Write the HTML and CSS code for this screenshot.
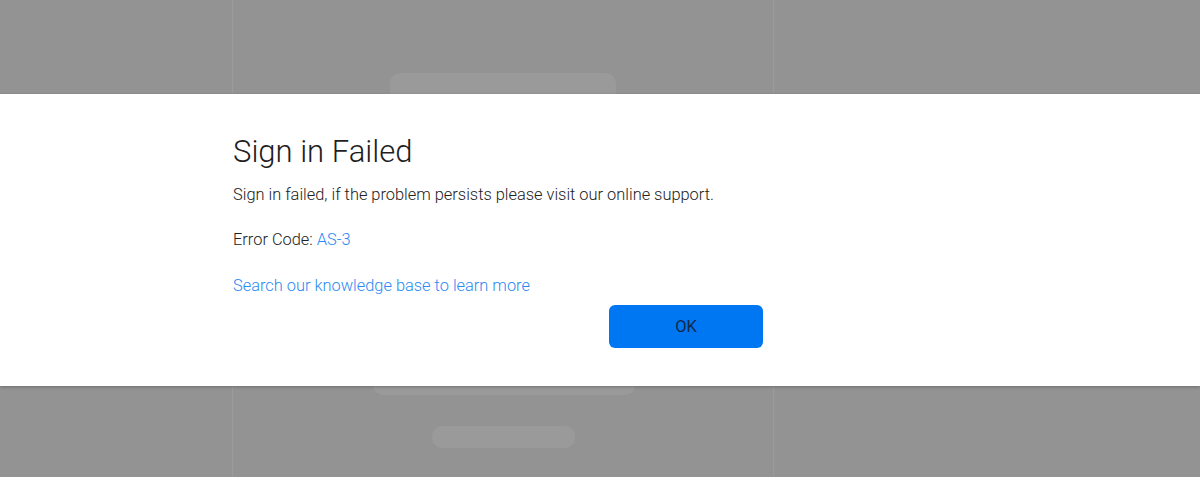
FILE: index.html
```html
<!DOCTYPE html>
<html lang="en">
<head>
<meta charset="utf-8">
<title>Sign in Failed</title>
<link rel="stylesheet" href="styles.css">
</head>
<body>
<div class="page">
  <div class="card">
    <div class="pill pill-top"></div>
    <div class="pill pill-mid"></div>
    <div class="pill pill-bottom"></div>
  </div>
</div>
<div class="modal">
  <div class="modal-body">
    <h1 class="title">Sign in Failed</h1>
    <p class="text">Sign in failed, if the problem persists please visit our online support.</p>
    <p class="text code">Error Code: <a class="link" href="#">AS-3</a></p>
    <p class="text kb"><a class="link" href="#">Search our knowledge base to learn more</a></p>
    <div class="actions">
      <button class="btn" type="button">OK</button>
    </div>
  </div>
</div>
</body>
</html>
```
FILE: styles.css
```css
* { box-sizing: border-box; }
html, body {
  margin: 0;
  padding: 0;
  width: 1200px;
  height: 477px;
  overflow: hidden;
  background: #939393;
  font-family: Roboto, "Liberation Sans", sans-serif;
}
.page {
  padding-left: 232px;
}
.card {
  width: 542px;
  height: 509px;
  margin-top: -32px;
  border: 1px solid #9b9b9b;
  border-bottom: none;
  border-radius: 18px 18px 0 0;
  display: flex;
  flex-direction: column;
  padding-top: 104px;
}
.pill {
  background: #9a9a9a;
  border-radius: 10px;
}
.pill-top {
  margin-left: 157px;
  width: 226px;
  height: 40px;
}
.pill-mid {
  margin-left: 140px;
  width: 262px;
  height: 40px;
  margin-top: 242px;
}
.pill-bottom {
  margin-left: 199px;
  width: 143px;
  height: 22px;
  margin-top: 31px;
}
.modal {
  position: absolute;
  left: 0;
  top: 94px;
  width: 1200px;
  height: 292px;
  background: #ffffff;
  box-shadow: 0 1px 3px rgba(0, 0, 0, 0.25);
}
.modal-body {
  margin-left: 233px;
  width: 530px;
  padding-top: 40px;
  display: flex;
  flex-direction: column;
}
.title {
  margin: 0;
  font-size: 31px;
  line-height: 36px;
  font-weight: 300;
  color: #1e1e1e;
}
.text {
  margin: 15px 0 0;
  font-size: 16.4px;
  line-height: 20px;
  font-weight: 300;
  color: #222222;
}
.code { margin-top: 25px; }
.kb { margin-top: 26px; }
.link {
  color: #2b8af3;
  text-decoration: none;
}
.actions {
  display: flex;
  justify-content: flex-end;
  margin-top: 9px;
}
.btn {
  width: 154px;
  height: 43px;
  border: none;
  border-radius: 6px;
  background: #0077f2;
  color: #14284a;
  font-family: Roboto, "Liberation Sans", sans-serif;
  font-size: 16.5px;
  font-weight: 400;
  padding: 0;
}
```
